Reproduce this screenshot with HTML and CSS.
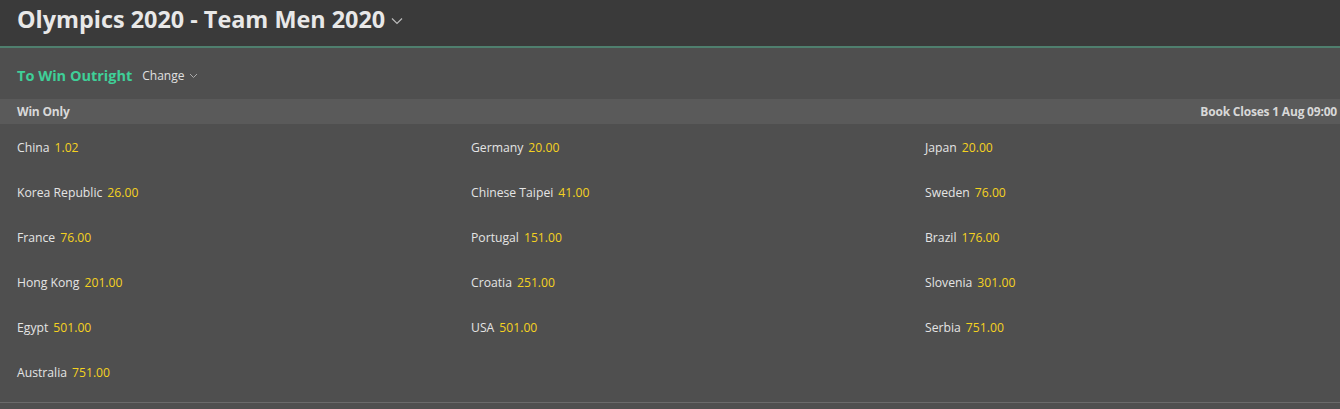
FILE: index.html
```html
<!DOCTYPE html>
<html lang="en">
<head>
    <meta charset="UTF-8">
    <title>Olympics 2020 - Team Men 2020</title>
    <link rel="stylesheet" href="styles.css">
</head>
<body>
    <div class="page-header">
        <h1>Olympics 2020 - Team Men 2020</h1>
        <svg class="chevron big" width="12" height="8" viewBox="0 0 12 8"><path d="M1 1.5 L6 6.5 L11 1.5" fill="none" stroke="#bbb" stroke-width="1.2"/></svg>
    </div>

    <div class="market-title">
        <span class="market-name">To Win Outright</span>
        <span class="change">Change</span>
        <svg class="chevron" width="9" height="6" viewBox="0 0 9 6"><path d="M1 1 L4.5 4.5 L8 1" fill="none" stroke="#aaa" stroke-width="1"/></svg>
    </div>

    <div class="sub-header">
        <span>Win Only</span>
        <span>Book Closes 1 Aug 09:00</span>
    </div>

    <div class="selections">
        <div class="sel">China <span class="odds">1.02</span></div>
        <div class="sel">Germany <span class="odds">20.00</span></div>
        <div class="sel">Japan <span class="odds">20.00</span></div>

        <div class="sel">Korea Republic <span class="odds">26.00</span></div>
        <div class="sel">Chinese Taipei <span class="odds">41.00</span></div>
        <div class="sel">Sweden <span class="odds">76.00</span></div>

        <div class="sel">France <span class="odds">76.00</span></div>
        <div class="sel">Portugal <span class="odds">151.00</span></div>
        <div class="sel">Brazil <span class="odds">176.00</span></div>

        <div class="sel">Hong Kong <span class="odds">201.00</span></div>
        <div class="sel">Croatia <span class="odds">251.00</span></div>
        <div class="sel">Slovenia <span class="odds">301.00</span></div>

        <div class="sel">Egypt <span class="odds">501.00</span></div>
        <div class="sel">USA <span class="odds">501.00</span></div>
        <div class="sel">Serbia <span class="odds">751.00</span></div>

        <div class="sel">Australia <span class="odds">751.00</span></div>
    </div>
</body>
</html>
```

FILE: styles.css
```css
body {
    margin: 0;
    background-color: #4f4f4f;
    font-family: "Open Sans", "Noto Sans", sans-serif;
    color: #e6e6e6;
    overflow: hidden;
}
.page-header {
    display: flex;
    align-items: center;
    height: 48px;
    padding: 0 17px 8px;
    background: #3a3a3a;
    border-bottom: 2px solid #4f7f6e;
    box-sizing: border-box;
}
h1 {
    margin: 0;
    font-size: 23.4px;
    font-weight: 700;
    color: #e8e8e8;
}
.chevron.big {
    margin-left: 6px;
    margin-top: 4px;
}
.market-title {
    display: flex;
    align-items: center;
    height: 51px;
    padding: 3px 17px 0;
    box-sizing: border-box;
}
.market-name {
    color: #3fcf98;
    font-weight: 700;
    font-size: 14.5px;
}
.change {
    margin-left: 10px;
    font-size: 12px;
    color: #e0e0e0;
}
.chevron {
    margin-left: 5px;
    margin-top: 2px;
}
.sub-header {
    display: flex;
    justify-content: space-between;
    align-items: center;
    height: 25px;
    padding: 0 3px 0 17px;
    background: #5a5a5a;
    font-size: 12px;
    font-weight: 700;
    color: #d8d8d8;
    letter-spacing: -0.2px;
}
.selections {
    display: grid;
    grid-template-columns: 454px 454px 454px;
    grid-auto-rows: 45px;
    padding: 1px 17px 7px;
    border-bottom: 1px solid #6a6a6a;
}
.sel {
    display: flex;
    align-items: center;
    gap: 5px;
    font-size: 12.2px;
    color: #e4e4e4;
}
.odds {
    color: #f5d21f;
}
```
